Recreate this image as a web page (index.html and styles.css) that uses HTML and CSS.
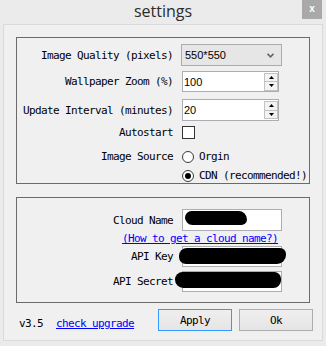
FILE: index.html
```html
<!DOCTYPE html>
<html>
<head>
<meta charset="utf-8">
<link rel="stylesheet" href="styles.css">
</head>
<body>
<div class="titlebar">
  <span class="title">settings</span>
  <span class="close">x</span>
</div>
<div class="panel">
  <div class="group g1">
    <div class="row r-combo">
      <span class="lbl">Image Quality (pixels)</span>
      <div class="combo">
        <span class="val">550*550</span>
        <svg class="chev" width="7" height="5" viewBox="0 0 7 5"><polyline points="0.5,0.8 3.5,3.8 6.5,0.8" fill="none" stroke="#666" stroke-width="1.6"/></svg>
      </div>
    </div>
    <div class="row r-spin1">
      <span class="lbl">Wallpaper Zoom (%)</span>
      <div class="spin h21">
        <span class="val">100</span>
        <div class="spin-btns">
          <span class="sb"><svg width="5" height="3" viewBox="0 0 5 3"><polygon points="0,3 2.5,0 5,3" fill="#000"/></svg></span>
          <span class="sb"><svg width="5" height="3" viewBox="0 0 5 3"><polygon points="0,0 5,0 2.5,3" fill="#000"/></svg></span>
        </div>
      </div>
    </div>
    <div class="row r-spin2">
      <span class="lbl">Update Interval (minutes)</span>
      <div class="spin h22">
        <span class="val">20</span>
        <div class="spin-btns">
          <span class="sb"><svg width="5" height="3" viewBox="0 0 5 3"><polygon points="0,3 2.5,0 5,3" fill="#000"/></svg></span>
          <span class="sb"><svg width="5" height="3" viewBox="0 0 5 3"><polygon points="0,0 5,0 2.5,3" fill="#000"/></svg></span>
        </div>
      </div>
    </div>
    <div class="row r-check">
      <span class="lbl">Autostart</span>
      <span class="checkbox"></span>
    </div>
    <div class="row r-radio1">
      <span class="lbl">Image Source</span>
      <span class="radio"></span><span class="rtext">Orgin</span>
    </div>
    <div class="row r-radio2">
      <span class="lbl"></span>
      <span class="radio checked"></span><span class="rtext">CDN (recommended!)</span>
    </div>
  </div>

  <div class="group g2">
    <div class="row r-cloud">
      <span class="lbl">Cloud Name</span>
      <div class="field h22"><span class="blob b1"></span></div>
    </div>
    <div class="row r-link">
      <a class="link" href="#">(How to get a cloud name?)</a>
    </div>
    <div class="row r-key">
      <span class="lbl">API Key</span>
      <div class="field h21"><span class="blob b2"></span></div>
    </div>
    <div class="row r-secret">
      <span class="lbl">API Secret</span>
      <div class="field h21"><span class="blob b3"></span></div>
    </div>
  </div>

  <div class="footer">
    <div class="foot-left">
      <span class="ver">v3.5</span>
      <a class="link" href="#">check upgrade</a>
    </div>
    <div class="buttons">
      <button class="btn default">Apply</button>
      <button class="btn">Ok</button>
    </div>
  </div>
</div>
</body>
</html>
```

FILE: styles.css
```css
html, body {
  margin: 0;
  padding: 0;
}
body {
  width: 326px;
  height: 346px;
  overflow: hidden;
  background: #ebebeb;
  font-family: "DejaVu Sans Mono", monospace;
  font-size: 11px;
  letter-spacing: -0.62px;
  color: #000;
}
.titlebar {
  position: relative;
  height: 24px;
  text-align: center;
}
.title {
  display: block;
  font-family: "Open Sans", sans-serif;
  font-size: 16px;
  line-height: 22px;
  letter-spacing: 0;
  color: #2b2b2b;
}
.close {
  position: absolute;
  top: 0;
  right: 4px;
  width: 20px;
  height: 19px;
  background: #a9a9a9;
  color: #fff;
  font: bold 10px/18px "Liberation Sans", sans-serif;
  letter-spacing: 0;
  text-align: center;
}
.panel {
  margin: 0 3px;
  height: 317px;
  box-sizing: border-box;
  border: 1px solid #dadada;
  background: #f0f0f0;
  padding: 12px 9px 0 12px;
}
.group {
  width: 294px;
  box-sizing: border-box;
  border: 1px solid #6b6b6b;
}
.g1 {
  height: 147px;
  padding-top: 6px;
}
.g2 {
  height: 106px;
  margin-top: 13px;
  padding-top: 11px;
}
.row {
  display: flex;
  align-items: center;
}
.lbl {
  flex: none;
  width: 156px;
  margin-right: 9px;
  text-align: right;
  white-space: nowrap;
}
.r-combo { height: 22px; }
.r-spin1 { height: 21px; margin-top: 5px; }
.r-spin2 { height: 22px; margin-top: 7px; }
.r-check { height: 13px; margin-top: 5px; }
.r-radio1 { height: 13px; margin-top: 11px; }
.r-radio2 { height: 13px; margin-top: 6px; }

.val {
  font-family: "Liberation Sans", sans-serif;
  font-size: 11px;
  letter-spacing: 0;
}
.combo {
  margin-left: -1px;
  width: 101px;
  height: 22px;
  box-sizing: border-box;
  border: 1px solid #acacac;
  background: #e6e6e6;
  display: flex;
  align-items: center;
  justify-content: space-between;
  padding: 0 7px 0 3px;
}
.spin {
  width: 97px;
  box-sizing: border-box;
  border: 1px solid #abadb3;
  background: #fff;
  display: flex;
  align-items: center;
  justify-content: space-between;
  padding: 0 0 0 1px;
}
.h21 { height: 21px; }
.h22 { height: 22px; }
.spin-btns {
  display: flex;
  flex-direction: column;
  margin-right: 0;
  width: 14px;
  height: 18px;
  box-sizing: border-box;
  border: 1px solid #c2c2c2;
  background: #f3f3f3;
}
.sb {
  flex: 1;
  display: flex;
  align-items: center;
  justify-content: center;
}
.sb + .sb {
  border-top: 1px solid #c2c2c2;
}
.checkbox {
  width: 13px;
  height: 13px;
  box-sizing: border-box;
  border: 1px solid #333;
  background: #fff;
}
.radio {
  flex: none;
  width: 12px;
  height: 12px;
  box-sizing: border-box;
  border: 1px solid #3a3a3a;
  border-radius: 50%;
  background: #fff;
  display: flex;
  align-items: center;
  justify-content: center;
}
.radio.checked::after {
  content: "";
  width: 6px;
  height: 6px;
  border-radius: 50%;
  background: #000;
}
.rtext {
  margin-left: 5px;
  white-space: nowrap;
}
.field {
  position: relative;
  width: 100px;
  box-sizing: border-box;
  border: 1px solid #abadb3;
  background: #fff;
}
.blob {
  position: absolute;
  background: #000;
}
.b1 { left: 2px; top: 1px; width: 62px; height: 14px; border-radius: 7px 9px 6px 8px; }
.b2 { left: -4px; top: 1px; width: 107px; height: 16px; border-radius: 8px 6px 9px 7px; }
.b3 { left: -8px; top: 0px; width: 106px; height: 16px; border-radius: 8px 7px 8px 9px; }
.r-cloud { height: 22px; }
.r-link { height: 15px; padding-left: 105px; }
.r-key { height: 21px; }
.r-secret { height: 21px; margin-top: 4px; }
.link {
  color: #0000ff;
  text-decoration: underline;
  white-space: nowrap;
}
.footer {
  margin-top: 6px;
  display: flex;
  justify-content: space-between;
  align-items: flex-start;
}
.foot-left {
  padding-top: 8px;
  padding-left: 3px;
  line-height: 13px;
  display: flex;
}
.ver {
  margin-right: 13px;
}
.buttons {
  display: flex;
  gap: 7px;
}
.btn {
  width: 74px;
  height: 22px;
  box-sizing: border-box;
  margin: 0;
  padding: 0;
  border: 1px solid #adadad;
  background: linear-gradient(#efefef, #e5e5e5);
  font-family: "DejaVu Sans Mono", monospace;
  font-size: 11px;
  letter-spacing: -0.62px;
  color: #000;
}
.btn.default {
  border-color: #3399ff;
}
```
